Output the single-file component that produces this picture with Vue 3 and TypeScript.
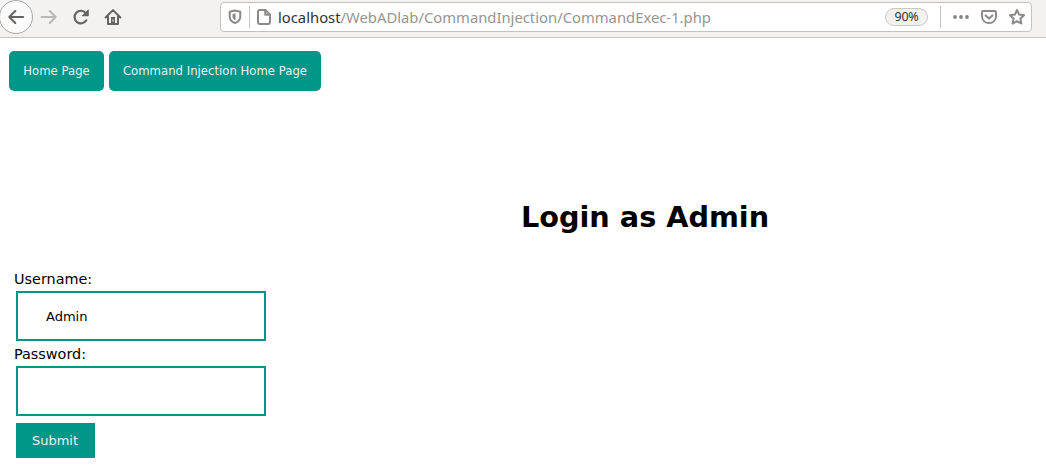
<script setup lang="ts">
import { ref } from 'vue'

const username = ref('Admin')
const password = ref('')
const links: string[] = ['Home Page', 'Command Injection Home Page']
</script>

<template>
  <div class="window">
    <header class="toolbar">
      <button class="back" aria-label="Back">
        <svg width="18" height="18" viewBox="0 0 18 18"><path d="M16.2 9H2.5M8.3 3 2.3 9l6 6" /></svg>
      </button>
      <svg class="nav forward" width="18" height="18" viewBox="0 0 18 18"><path d="M1.5 9h14M9.7 3l6 6-6 6" /></svg>
      <svg class="nav reload" width="18" height="18" viewBox="0 0 18 18">
        <path d="M14.300 12.300A6.300 6.300 0 1 1 13.700 5" />
        <path class="solid" d="M16 1.600q.8-.6.8.4v5.400q0 .8-.8.8h-5.400q-1 0-.4-.8z" />
      </svg>
      <svg class="nav home" width="18" height="18" viewBox="0 0 18 18">
        <path d="M1.6 9.5 9 2.1l7.4 7.4M4 8.5v7.4h10V8.5" />
        <path class="solid" d="M7 9h4v7H7z" />
        <path class="knob" d="M9 11.8v1.4" />
      </svg>
      <div class="address">
        <svg class="icon" width="14" height="16" viewBox="0 0 14 16">
          <path d="M7 1.500 12.300 2.800v4.400c0 3.500-2 5.700-5.300 6.800-3.300-1.100-5.300-3.300-5.300-6.800V2.800z" />
          <path class="solid" d="M7.500 4.300v7.200C5.400 10.600 4.500 9.200 4.500 7.200V5z" />
        </svg>
        <span class="rule first"></span>
        <svg class="icon page" width="14" height="16" viewBox="0 0 14 16">
          <path d="M3 1h5.300L13 5.700V13a2 2 0 0 1-2 2H3a2 2 0 0 1-2-2V3a2 2 0 0 1 2-2z" />
          <path d="M8.200 1.300v4.500h4.500" />
        </svg>
        <span class="url"><b>localhost</b>/WebADlab/CommandInjection/CommandExec-1.php</span>
        <span class="zoom">90%</span>
        <span class="rule second"></span>
        <svg class="dots" width="16" height="4" viewBox="0 0 16 4"><circle cx="2" cy="2" r="1.900" /><circle cx="8" cy="2" r="1.900" /><circle cx="14" cy="2" r="1.900" /></svg>
        <svg class="icon pocket" width="16" height="16" viewBox="0 0 16 16">
          <path d="M2.200 2h11.600c.7 0 1.200.5 1.200 1.200V7c0 4.300-3 7-7 7s-7-2.700-7-7V3.200C1 2.500 1.500 2 2.200 2z" /><path d="m4.600 6.400 3.400 3.200 3.400-3.200" />
        </svg>
        <svg class="icon star" width="18" height="18" viewBox="0 0 18 18">
          <path d="m9 2 2.100 4.600 5 .6-3.700 3.400 1 5L9 13.100l-4.400 2.500 1-5-3.700-3.400 5-.6z" />
        </svg>
      </div>
    </header>

    <main>
      <nav class="links">
        <a v-for="(label, i) in links" :key="label" :class="['link', { wide: i === 1 }]"><span>{{ label }}</span></a>
      </nav>
      <h1>Login as Admin</h1>
      <form @submit.prevent>
        <label for="user">Username:</label>
        <input id="user" v-model="username" type="text" />
        <label for="pass">Password:</label>
        <input id="pass" v-model="password" type="password" />
        <button class="submit" type="submit">Submit</button>
      </form>
    </main>
  </div>
</template>

<style>
body { margin: 0; background: #fff; }
</style>

<style scoped>
* { box-sizing: border-box; }
.window {
  width: 1046px;
  height: 469px;
  overflow: hidden;
  background: #fff;
  color: #000;
  font-family: "DejaVu Sans", sans-serif;
}
.toolbar {
  height: 38px;
  display: flex;
  align-items: flex-start;
  background: #f3f2f1;
  border-bottom: 1px solid #c4c3c2;
}
svg { display: block; flex: none; fill: none; stroke: #656462; stroke-width: 2; stroke-linecap: round; stroke-linejoin: round; }
.solid { fill: #656462; stroke: none; }
.back {
  flex: none;
  width: 34px;
  height: 34px;
  margin-left: -1px;
  padding: 0;
  display: flex;
  align-items: center;
  justify-content: center;
  border: 1px solid #aaa9a8;
  border-radius: 50%;
  background: #fbfafa;
}
.nav { margin-top: 8px; }
.forward { margin-left: 7px; stroke: #b9b8b7; }
.reload { margin-left: 14px; stroke-width: 2.200; }
.home { margin-left: 14px; }
.knob { stroke: #f3f2f1; stroke-width: 1; }
.address {
  width: 812px;
  height: 30px;
  margin: 2px 0 0 98px;
  display: flex;
  align-items: center;
  background: #fff;
  border: 1px solid #c3c2c1;
  border-radius: 4px;
  flex: none;
}
.icon { stroke: #8b8a89; stroke-width: 2; }
.icon .solid { fill: #8b8a89; }
.address > .icon:first-child { margin-left: 7px; }
.rule { width: 1px; height: 22px; background: #c6c5c4; flex: none; }
.first { margin-left: 7px; }
.page { margin-left: 7px; }
.url {
  width: 607px;
  margin-left: 7px;
  font: 14.800px/22px "Noto Sans", sans-serif;
  color: #969594;
  white-space: nowrap;
}
.url b { font-weight: 400; color: #2e3436; }
.zoom {
  width: 43px;
  height: 18px;
  border: 1px solid #c9c8c7;
  border-radius: 9px;
  background: #f2f1f0;
  color: #303536;
  font: 12.500px/16px "Noto Sans", sans-serif;
  letter-spacing: -0.300px;
  text-align: center;
}
.second { margin-left: 12px; }
.dots { margin-left: 12px; fill: #858483; stroke: none; }
.pocket { margin-left: 12px; }
.star { margin-left: 11px; }
main { padding: 13px 9px 0; }
.links { display: flex; gap: 5px; }
.link {
  width: 95px;
  height: 40px;
  display: flex;
  align-items: center;
  justify-content: center;
  border-radius: 5px;
  background: #009688;
  color: #e6f5f3;
  font-size: 11.700px;
  white-space: nowrap;
}
.wide { width: 212px; }
h1 {
  margin: 109px 0 0 512px;
  font-size: 28.700px;
  line-height: 34px;
  font-weight: 700;
  white-space: nowrap;
}
form { margin: 37px 0 0 5px; display: flex; flex-direction: column; align-items: flex-start; }
label { height: 20px; font-size: 14.400px; line-height: 17px; }
input {
  width: 250px;
  height: 50px;
  margin: 0 0 5px 2px;
  padding: 0 28px;
  border: 2px solid #009688;
  background: #fff;
  color: #000;
  font: 13px "DejaVu Sans", sans-serif;
  outline: none;
}
.submit {
  width: 79px;
  height: 35px;
  margin: 2px 0 0 2px;
  padding: 0 1px 0 0;
  border: 0;
  background: #009688;
  color: #e6f5f3;
  font: 13px "DejaVu Sans", sans-serif;
}
</style>
